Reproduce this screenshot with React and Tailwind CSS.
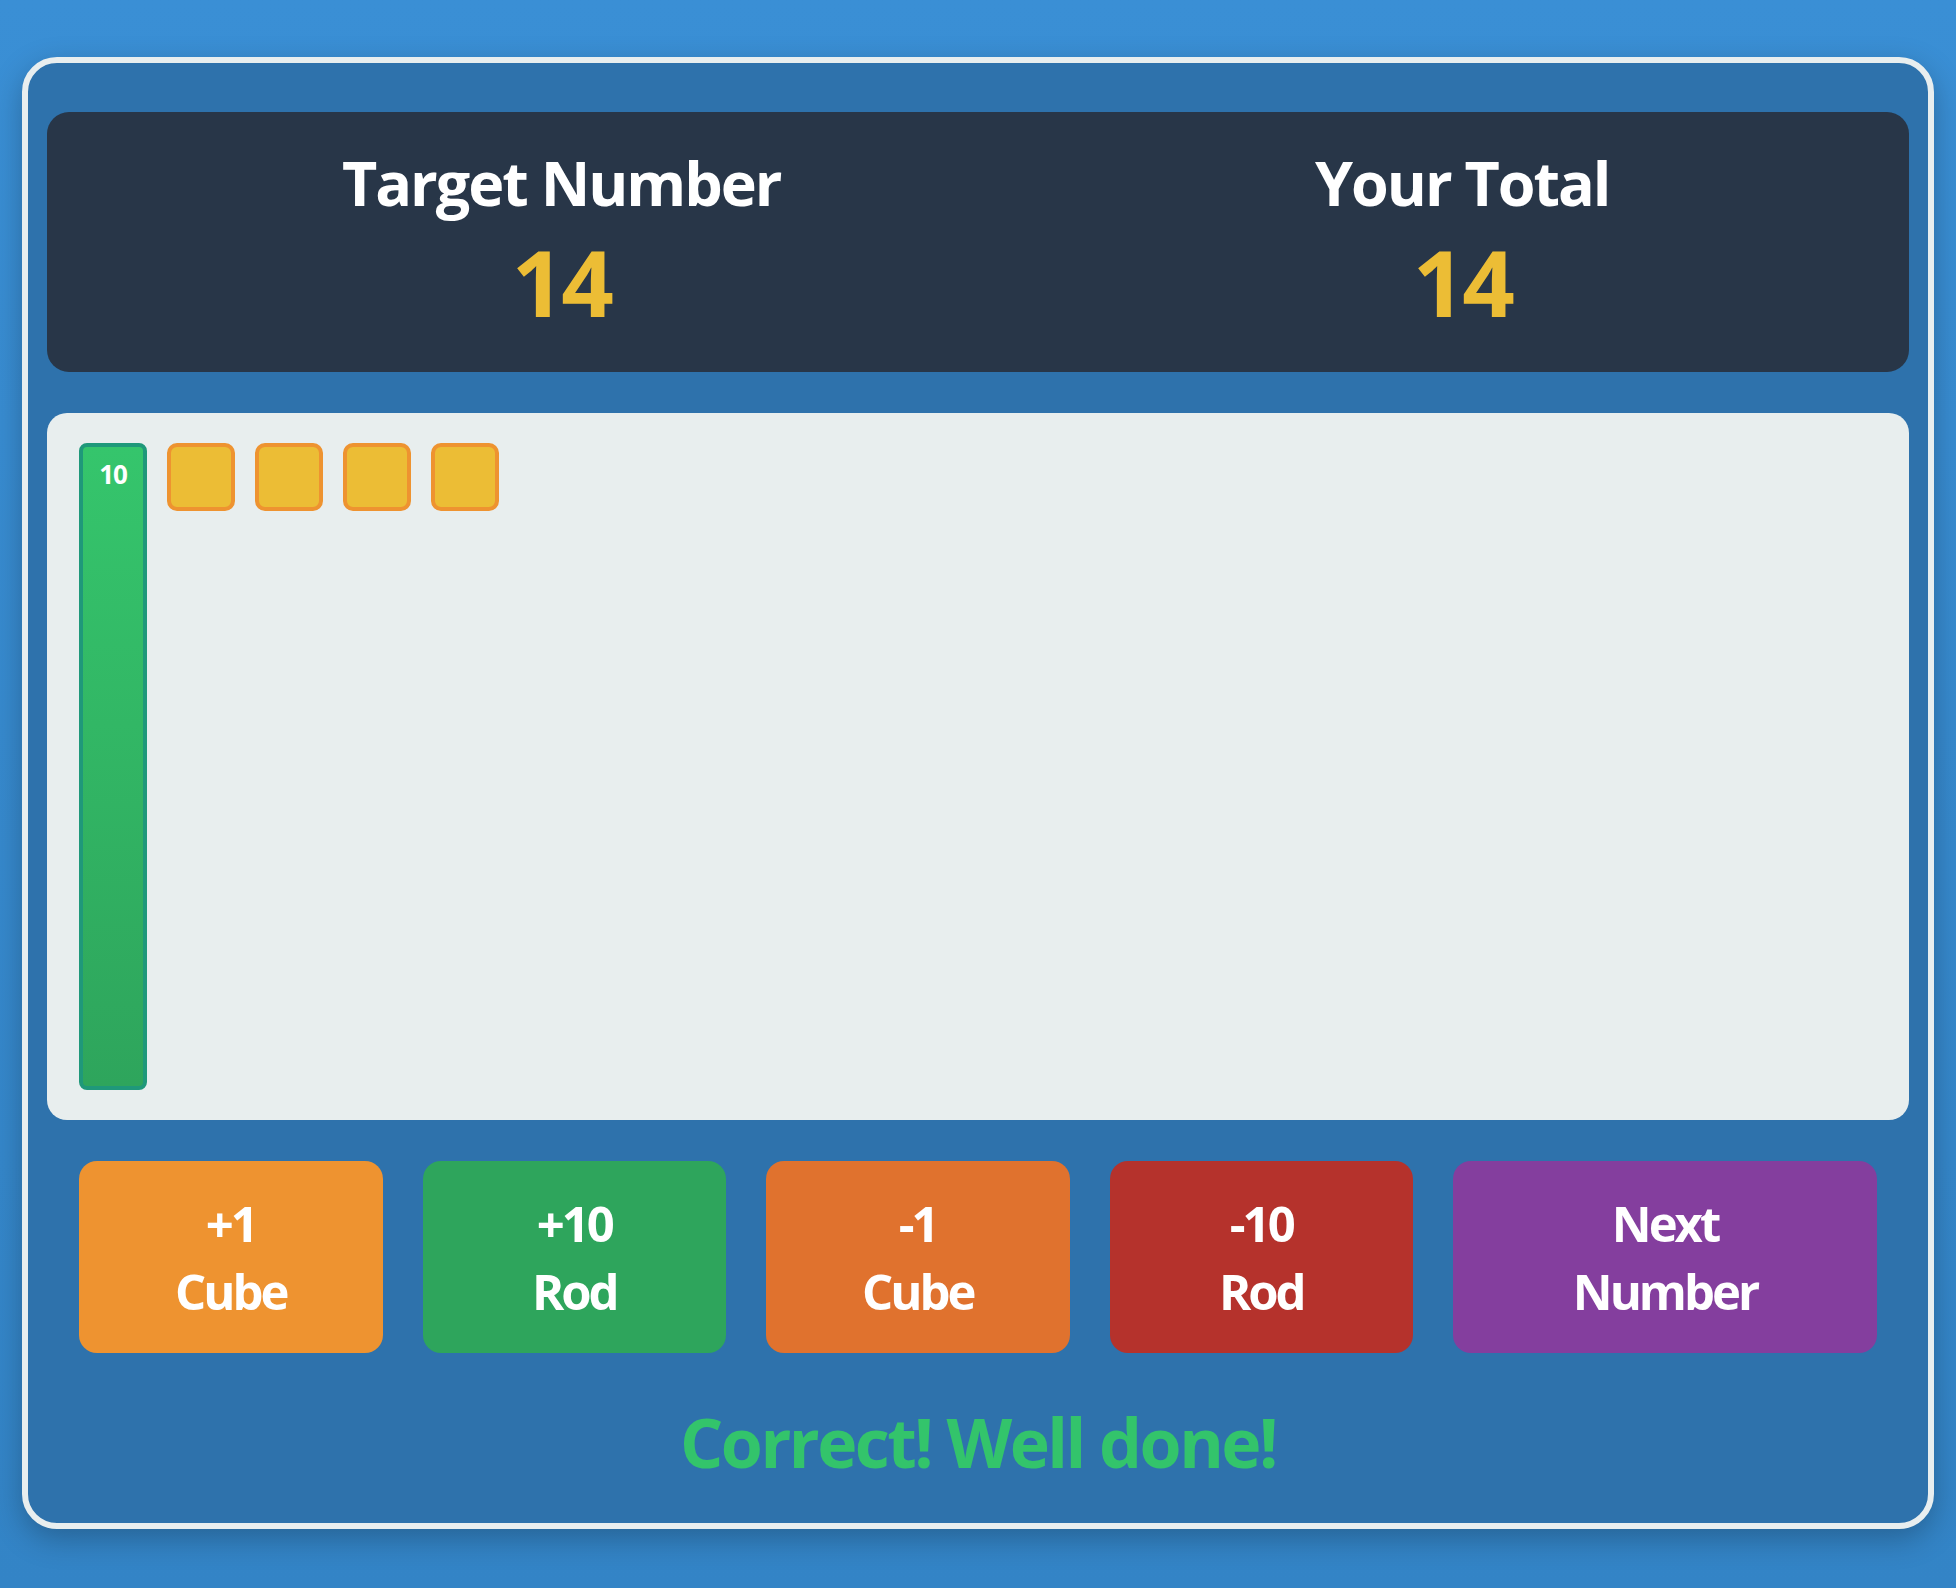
import React from "react"

const font = { fontFamily: '"Comic Sans MS", "Open Sans", sans-serif' }

const Stat = ({ label, value, width }) => (
  <div className={`flex flex-col items-center whitespace-nowrap ${width}`}>
    <div className="text-[61px] leading-[84px] tracking-[-2px] text-white">{label}</div>
    <div className="mt-[1px] text-[92px] leading-[112px] tracking-[-3px] text-[#ecbd35]">{value}</div>
  </div>
)

const Rod = () => (
  <div className="w-[68px] h-[647px] shrink-0 rounded-[8px] border-4 border-[#1f987a] bg-linear-to-b from-[#35c56c] to-[#2ea55c] flex justify-center pt-[14px]">
    <span className="text-[26px] leading-[26px] tracking-[-1px] text-white">10</span>
  </div>
)

const Cube = () => (
  <div className="w-[68px] h-[68px] shrink-0 rounded-[10px] border-4 border-[#ee9330] bg-[#ecbd35]" />
)

const buttons = [
  { top: "+1", bottom: "Cube", color: "bg-[#ee9330]", w: "flex-1" },
  { top: "+10", bottom: "Rod", color: "bg-[#2ea55c]", w: "flex-1" },
  { top: "-1", bottom: "Cube", color: "bg-[#e0722e]", w: "flex-1" },
  { top: "-10", bottom: "Rod", color: "bg-[#b5322c]", w: "flex-1" },
  { top: "Next", bottom: "Number", color: "bg-[#843e9e]", w: "w-[424px]" },
]

export default function App() {
  return (
    <div
      className="min-h-screen w-full bg-linear-to-b from-[#3a8fd5] to-[#3384c6] px-[22px] pt-[57px] pb-[59px] font-bold"
      style={font}
    >
      <div className="rounded-[35px] border-[6px] border-[#e8eeef] bg-[#2e72ac] shadow-[0_10px_30px_rgba(0,0,0,0.25)] px-[19px] pt-[49px] pb-[33px]">
        {/* scoreboard */}
        <div className="h-[260px] rounded-[22px] bg-[#283648] flex justify-around items-start px-[30px] pt-[29px]">
          <Stat label="Target Number" value="14" width="w-[430px]" />
          <Stat label="Your Total" value="14" width="w-[295px]" />
        </div>

        {/* blocks */}
        <div className="mt-[41px] h-[707px] rounded-[20px] bg-[#e8eeee] px-[32px] pt-[30px] flex items-start gap-[20px]">
          <Rod />
          <Cube />
          <Cube />
          <Cube />
          <Cube />
        </div>

        {/* controls */}
        <div className="mt-[41px] px-[32px] flex gap-[40px]">
          {buttons.map((b) => (
            <button
              key={b.top}
              className={`${b.w} ${b.color} h-[192px] rounded-[18px] flex flex-col items-center justify-center text-white text-[49px] leading-[68px] tracking-[-3px] text-center`}
            >
              <span>{b.top}</span>
              <span>{b.bottom}</span>
            </button>
          ))}
        </div>

        <div className="mt-[41px] h-[96px] text-center text-[68px] leading-[96px] tracking-[-2.5px] text-[#33c46b]">
          Correct! Well done!
        </div>
      </div>
    </div>
  )
}
